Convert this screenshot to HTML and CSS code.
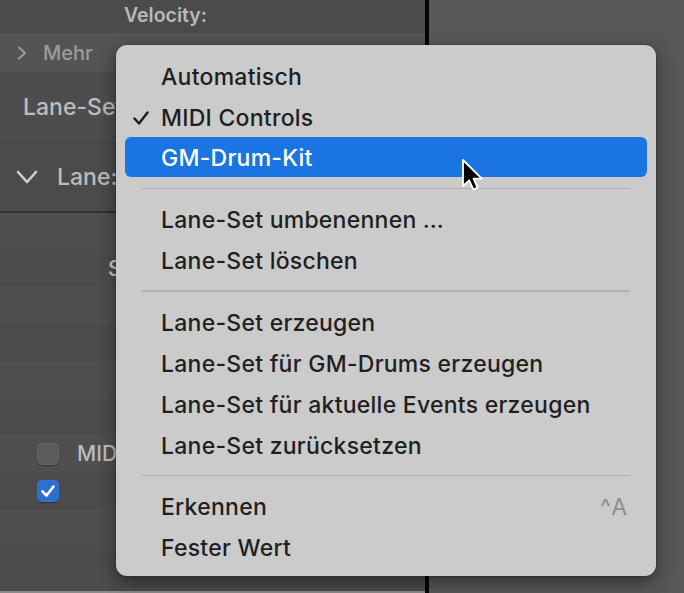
FILE: index.html
```html
<!DOCTYPE html>
<html>
<head>
<meta charset="utf-8">
<link rel="stylesheet" href="styles.css">
</head>
<body>
<div class="screen">
  <div class="panel">
    <div class="row row-velocity"><span class="label-velocity">Velocity:</span></div>
    <div class="row row-mehr">
      <svg class="chev-right" width="10" height="14" viewBox="0 0 10 14"><polyline points="2,1.5 8,7 2,12.5" fill="none" stroke="#9c9c9c" stroke-width="2" stroke-linecap="round" stroke-linejoin="round"/></svg>
      <span class="label-mehr">Mehr</span>
    </div>
    <div class="row row-laneset"><span class="label-big">Lane-Set:</span></div>
    <div class="row row-lane">
      <svg class="chev-down" width="22" height="14" viewBox="0 0 22 14"><polyline points="2,2 11,12 20,2" fill="none" stroke="#cfcfcf" stroke-width="2.6" stroke-linecap="round" stroke-linejoin="round"/></svg>
      <span class="label-big">Lane:</span>
    </div>
    <div class="stripes">
      <div class="stripe a"></div>
      <div class="stripe b"><span class="label-s">S</span></div>
      <div class="stripe a"></div>
      <div class="stripe b"></div>
      <div class="stripe a"></div>
      <div class="stripe b"></div>
      <div class="stripe a"><span class="cb"></span><span class="label-midi">MIDI</span></div>
      <div class="stripe b"><span class="cb on"><svg width="16" height="14" viewBox="0 0 16 14"><polyline points="2.5,7.5 6.5,11.5 13.5,2.5" fill="none" stroke="#fff" stroke-width="2.6" stroke-linecap="round" stroke-linejoin="round"/></svg></span></div>
      <div class="stripe a"></div>
      <div class="stripe b"></div>
    </div>
    <div class="bottom-line"></div>
  </div>
  <div class="divider"></div>
  <div class="right"></div>

  <div class="menu">
    <div class="item">Automatisch</div>
    <div class="item checked">
      <svg class="check" width="16" height="14" viewBox="0 0 16 14"><polyline points="1.5,7.5 6,12.5 14.5,1.5" fill="none" stroke="#1c1c1c" stroke-width="2.4" stroke-linecap="round" stroke-linejoin="round"/></svg>
      MIDI Controls
    </div>
    <div class="item selected">GM-Drum-Kit</div>
    <div class="sep"></div>
    <div class="item">Lane-Set umbenennen …</div>
    <div class="item">Lane-Set löschen</div>
    <div class="sep"></div>
    <div class="item">Lane-Set erzeugen</div>
    <div class="item">Lane-Set für GM-Drums erzeugen</div>
    <div class="item">Lane-Set für aktuelle Events erzeugen</div>
    <div class="item">Lane-Set zurücksetzen</div>
    <div class="sep"></div>
    <div class="item"><span>Erkennen</span><span class="shortcut">^A</span></div>
    <div class="item">Fester Wert</div>
  </div>

  <svg class="cursor" width="24" height="36" viewBox="0 0 24 36"><path d="M2 2 L2 28 L8.2 22.3 L12.4 31.5 L16.6 29.6 L12.5 20.6 L20.8 20.6 Z" fill="#000" stroke="#fff" stroke-width="1.8" stroke-linejoin="round"/></svg>
</div>
</body>
</html>
```
FILE: styles.css
```css
* { box-sizing: border-box; }
html, body { margin: 0; padding: 0; }
body {
  width: 684px;
  height: 593px;
  overflow: hidden;
  background: #4b4b4b;
  font-family: Inter, "Noto Sans", "Liberation Sans", sans-serif;
}
.screen {
  position: relative;
  width: 684px;
  height: 593px;
  display: flex;
}
.panel {
  width: 425px;
  display: flex;
  flex-direction: column;
  background: #4b4b4b;
}
.divider {
  width: 4px;
  background: #050505;
}
.right {
  flex: 1;
  background: #575757;
}
.row {
  display: flex;
  align-items: center;
}
.row-velocity {
  height: 33px;
  padding-left: 124px;
  padding-bottom: 3px;
  background: #4b4b4b;
}
.label-velocity {
  color: #b9b9b9;
  font-size: 19.5px;
  font-weight: 600;
}
.row-mehr {
  height: 39px;
  background: #545454;
  padding-left: 17px;
  gap: 16px;
}
.label-mehr {
  color: #9c9c9c;
  font-size: 20px;
  font-weight: 500;
}
.row-laneset {
  height: 71px;
  padding-left: 23px;
  background: #4d4d4d;
  border-bottom: 1px solid #404040;
}
.label-big {
  color: #bdbdbd;
  font-size: 23px;
  font-weight: 500;
}
.row-lane {
  height: 70px;
  padding-left: 16px;
  gap: 19px;
  background: #4b4b4b;
  border-bottom: 2px solid #303030;
}
.stripes {
  flex: 1;
  display: flex;
  flex-direction: column;
}
.stripe {
  height: 37px;
  display: flex;
  align-items: center;
  flex-shrink: 0;
}
.stripe.a { background: #4f4f4f; }
.stripe.b { background: #4c4c4c; }
.label-s {
  margin-left: 108px;
  color: #cfcfcf;
  font-size: 21px;
  font-weight: 500;
}
.cb {
  margin-left: 37px;
  width: 22px;
  height: 22px;
  border-radius: 5px;
  background: #5c5c5c;
  box-shadow: 0 1px 1px rgba(0,0,0,0.35), inset 0 0 0 1px rgba(255,255,255,0.05);
  display: flex;
  align-items: center;
  justify-content: center;
}
.cb.on {
  background: #2b6fd0;
}
.label-midi {
  margin-left: 18px;
  color: #bdbdbd;
  font-size: 21px;
  font-weight: 500;
}
.bottom-line {
  height: 2px;
  background: #8c8c8c;
  flex-shrink: 0;
}

.menu {
  position: absolute;
  left: 116px;
  top: 45px;
  width: 540px;
  height: 531px;
  padding: 10px 9px 7px;
  background: #cbcbcb;
  border-radius: 11px;
  box-shadow: 0 0 0 1px rgba(0,0,0,0.12), 0 6px 18px rgba(0,0,0,0.45);
  display: flex;
  flex-direction: column;
}
.item {
  position: relative;
  height: 41px;
  flex-shrink: 0;
  display: flex;
  align-items: center;
  justify-content: space-between;
  padding: 2px 18px 0 36px;
  color: #1f1f1f;
  font-size: 23px;
  font-weight: 450;
  letter-spacing: 0.25px;
  border-radius: 6px;
}
.item.checked { justify-content: flex-start; }
.item.selected {
  background: #1a74e1;
  color: #ffffff;
  height: 40px;
  margin-bottom: 1px;
}
.check {
  position: absolute;
  left: 8px;
  top: 15px;
}
.shortcut {
  color: #8d8d8d;
  letter-spacing: 2px;
  font-weight: 400;
}
.sep {
  height: 20.5px;
  flex-shrink: 0;
  display: flex;
  align-items: center;
  padding: 0 17px;
}
.sep::before {
  content: "";
  display: block;
  width: 100%;
  height: 1.5px;
  background: #b2b2b2;
}
.cursor {
  position: absolute;
  left: 461px;
  top: 158px;
}
```
